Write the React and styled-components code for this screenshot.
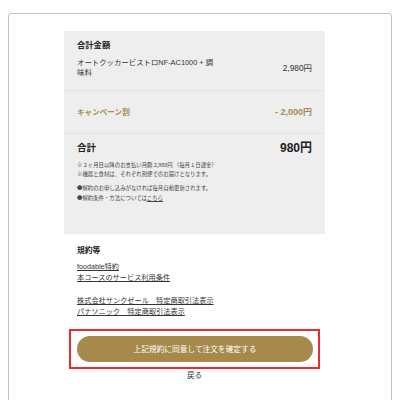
import React from "react";
import styled, { createGlobalStyle } from "styled-components";

const FONT = `"Liberation Sans", "Noto Sans CJK JP", sans-serif`;
const CJK = `"Noto Sans CJK JP", "Liberation Sans", sans-serif`;

const Global = createGlobalStyle`
  body {
    margin: 0;
    background: #ffffff;
    font-family: ${FONT};
    color: #333333;
  }
`;

const Card = styled.div`
  margin: 13px 0 0 8px;
  width: 382px;
  height: 371px;
  border: 1px solid #c4c4c4;
  border-radius: 3px;
  box-shadow: 0 1px 1px rgba(0, 0, 0, 0.12);
  padding-top: 17px;
  box-sizing: content-box;
`;

const Column = styled.div`
  width: 261px;
  margin-left: 55px;
`;

const Panel = styled.div`
  background: #eeeeee;
`;

const Section = styled.div`
  padding: ${(p) => p.$pad || "0 13px"};
  border-bottom: ${(p) => (p.$last ? "none" : "1px solid #e2e2e2")};
  height: ${(p) => p.$height || "auto"};
  display: ${(p) => (p.$center ? "flex" : "block")};
  align-items: center;
  justify-content: space-between;
`;

const Heading = styled.div`
  font-size: 8.3px;
  font-weight: 700;
  line-height: 12px;
  color: #222;
`;

const Row = styled.div`
  display: flex;
  justify-content: space-between;
  align-items: center;
  margin-top: 7px;
`;

const ItemName = styled.div`
  font-size: 7.4px;
  line-height: 9.5px;
  color: #333;
`;

const Price = styled.div`
  font-size: 8.4px;
  color: #333;
  line-height: 12px;
`;

const Gold = styled.div`
  font-size: ${(p) => p.$size || "7.6px"};
  font-weight: 700;
  color: #a88c4f;
`;

const TotalRow = styled.div`
  display: flex;
  justify-content: space-between;
  align-items: center;
  height: 14px;
`;

const TotalLabel = styled.div`
  font-size: 9.5px;
  font-weight: 700;
  color: #222;
`;

const TotalValue = styled.div`
  font-size: 12px;
  font-weight: 700;
  color: #222;
`;

const Notes = styled.div`
  margin-top: ${(p) => p.$mt || "7.5px"};
  font-family: ${CJK};
  font-size: 5.4px;
  line-height: ${(p) => p.$lh || "9px"};
  color: #444;
  a {
    color: #444;
    text-decoration: underline;
  }
`;

const Terms = styled.div`
  padding: 11px 13px 0;
`;

const TermsTitle = styled.div`
  font-size: 7.8px;
  font-weight: 700;
  line-height: 12px;
  color: #222;
`;

const LinkGroup = styled.div`
  margin-top: ${(p) => p.$mt};
  display: flex;
  flex-direction: column;
  align-items: flex-start;
`;

const TermLink = styled.a`
  font-size: 7.2px;
  line-height: 11px;
  color: #333;
  text-decoration: underline;
`;

const Highlight = styled.div`
  margin: 11.5px 0 0 5px;
  width: 251px;
  box-sizing: border-box;
  border: 2px solid #ea2b2f;
  padding: 5px 5px 5px 6px;
`;

const Confirm = styled.button`
  display: block;
  width: 236px;
  height: 26px;
  border: none;
  border-radius: 13px;
  background: #a58a4b;
  color: #ffffff;
  font-family: ${FONT};
  font-size: 7.7px;
  padding: 0;
`;

const Back = styled.div`
  margin-top: 2px;
  text-align: center;
  font-size: 7.5px;
  line-height: 10px;
  color: #333;
`;

const Shade = styled.div`
  margin: 1px 0 0 50px;
  width: 290px;
  height: 1px;
  background: #efefef;
`;

export default function App() {
  return (
    <>
      <Global />
      <Card>
        <Column>
          <Panel>
            <Section $pad="8px 13px 12.5px">
              <Heading>合計金額</Heading>
              <Row>
                <ItemName>
                  オートクッカービストロNF-AC1000 + 調
                  <br />
                  味料
                </ItemName>
                <Price>2,980円</Price>
              </Row>
            </Section>
            <Section $center $height="42px">
              <Gold>キャンペーン割</Gold>
              <Gold $size="9px">- 2,000円</Gold>
            </Section>
            <Section $last $pad="6px 13px 31px">
              <TotalRow>
                <TotalLabel>合計</TotalLabel>
                <TotalValue>980円</TotalValue>
              </TotalRow>
              <Notes>
                ※２ヶ月目以降のお支払い月額 2,980円 （毎月１日課金）
                <br />
                ※機器と食材は、それぞれ別便でのお届けとなります。
              </Notes>
              <Notes $mt="3.5px" $lh="10px">
                ●解約のお申し込みがなければ毎月自動更新されます。
                <br />
                ●解約条件・方法については<a href="#">こちら</a>
              </Notes>
            </Section>
          </Panel>
          <Terms>
            <TermsTitle>規約等</TermsTitle>
            <LinkGroup $mt="4.5px">
              <TermLink href="#">foodable特約</TermLink>
              <TermLink href="#">本コースのサービス利用条件</TermLink>
            </LinkGroup>
            <LinkGroup $mt="12px">
              <TermLink href="#">株式会社サンクゼール　特定商取引法表示</TermLink>
              <TermLink href="#">パナソニック　特定商取引法表示</TermLink>
            </LinkGroup>
          </Terms>
          <Highlight>
            <Confirm>上記規約に同意して注文を確定する</Confirm>
          </Highlight>
          <Back>戻る</Back>
        </Column>
      </Card>
      <Shade />
    </>
  );
}
